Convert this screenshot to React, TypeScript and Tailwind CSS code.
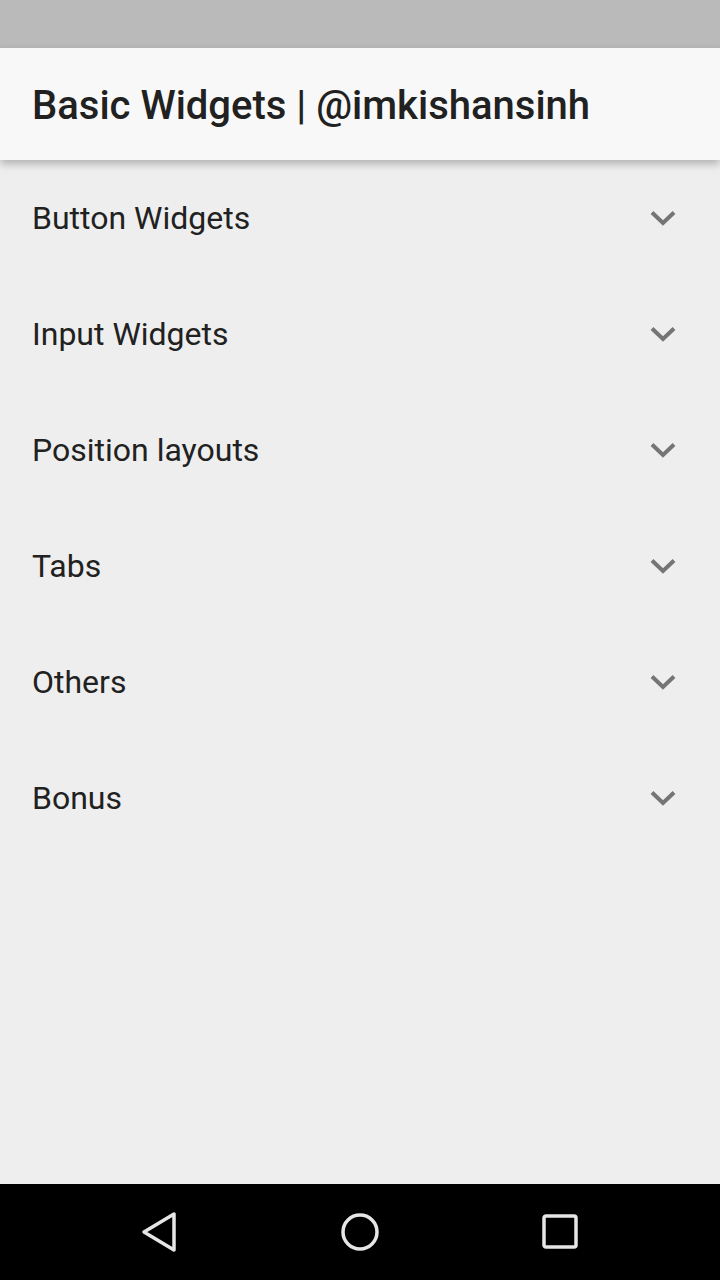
import { useState } from 'react';

const sections = ['Button Widgets', 'Input Widgets', 'Position layouts', 'Tabs', 'Others', 'Bonus'];

const Chevron = () => (
  <svg width="28" height="18" viewBox="0 0 28 18" fill="none">
    <path d="M3 3.5 L14 14 L25 3.5" stroke="#757575" strokeWidth="4" />
  </svg>
);

const NavBar = () => (
  <div className="flex h-[96px] items-center justify-center bg-black">
    <div className="flex w-[200px] justify-center">
      <svg width="40" height="44" viewBox="0 0 40 44" fill="none">
        <path d="M34 4 L34 40 L4 22 Z" stroke="#e6e6e6" strokeWidth="3.5" strokeLinejoin="round" />
      </svg>
    </div>
    <div className="flex w-[200px] justify-center">
      <svg width="40" height="40" viewBox="0 0 40 40" fill="none">
        <circle cx="20" cy="20" r="17" stroke="#e6e6e6" strokeWidth="3.5" />
      </svg>
    </div>
    <div className="flex w-[200px] justify-center">
      <svg width="36" height="36" viewBox="0 0 36 36" fill="none">
        <rect x="2" y="2" width="32" height="31" rx="2" stroke="#e6e6e6" strokeWidth="3.5" />
      </svg>
    </div>
  </div>
);

export default function App() {
  const [open, setOpen] = useState<string | null>(null);

  return (
    <div className="flex h-[1280px] w-[720px] flex-col bg-[#eeeeee] font-['Roboto',sans-serif] text-[#212121]">
      <div className="h-[48px] bg-[#bababa]" />
      <header className="relative z-10 flex h-[112px] items-center bg-[#f8f8f8] px-[32px] pt-[3px] shadow-[0_4px_8px_rgba(0,0,0,0.25)]">
        <h1 className="text-[40px] font-medium leading-none">Basic Widgets | @imkishansinh</h1>
      </header>
      <main className="flex-1">
        {sections.map((s) => (
          <button
            key={s}
            onClick={() => setOpen(open === s ? null : s)}
            className="flex h-[116px] w-full items-center justify-between pl-[32px] pr-[43px] text-left"
          >
            <span className="text-[32px] leading-none">{s}</span>
            <Chevron />
          </button>
        ))}
      </main>
      <NavBar />
    </div>
  );
}
